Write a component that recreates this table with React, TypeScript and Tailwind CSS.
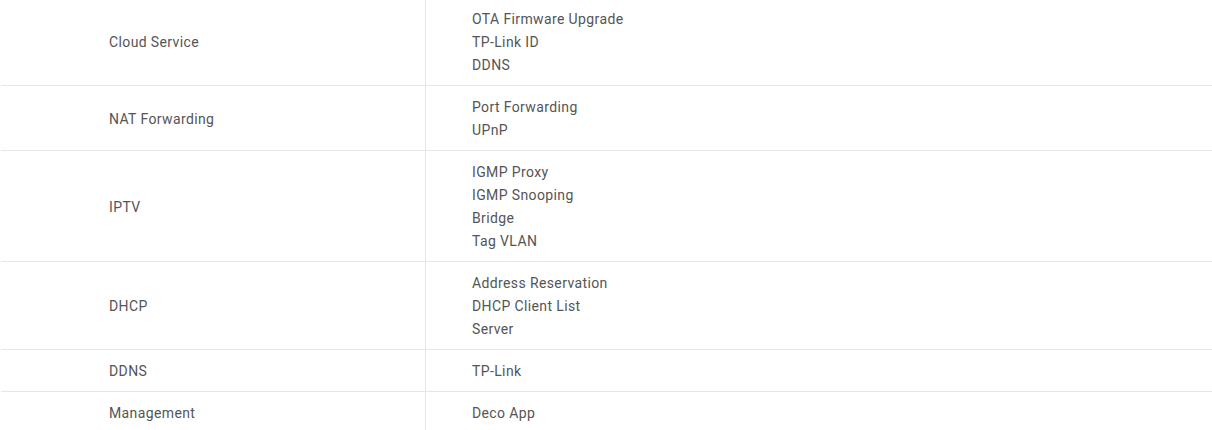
import React from "react";

const rows: { name: string; items: string[] }[] = [
  { name: "Cloud Service", items: ["OTA Firmware Upgrade", "TP-Link ID", "DDNS"] },
  { name: "NAT Forwarding", items: ["Port Forwarding", "UPnP"] },
  { name: "IPTV", items: ["IGMP Proxy", "IGMP Snooping", "Bridge", "Tag VLAN"] },
  { name: "DHCP", items: ["Address Reservation", "DHCP Client List", "Server"] },
  { name: "DDNS", items: ["TP-Link"] },
  { name: "Management", items: ["Deco App"] },
];

export default function App() {
  return (
    <div
      className="w-[1212px] h-[430px] overflow-hidden bg-white pl-[1px] text-[14px] leading-[23px] tracking-[0.38px] text-[#555555]"
      style={{ fontFamily: "Roboto, 'Liberation Sans', sans-serif" }}
    >
      <div className="-mt-[2px] flex flex-col">
        {rows.map((r, i) => (
          <div
            key={i}
            className={
              i < rows.length - 1
                ? "flex border-b border-[#e6e6e6]"
                : "flex"
            }
          >
            <div className="w-[425px] shrink-0 flex items-center pl-[108px] pt-[10px] pb-[8px] border-r border-[#e6e6e6]">
              {r.name}
            </div>
            <div className="flex flex-col pl-[46px] pt-[10px] pb-[8px]">
              {r.items.map((it, j) => (
                <div key={j}>{it}</div>
              ))}
            </div>
          </div>
        ))}
      </div>
    </div>
  );
}
